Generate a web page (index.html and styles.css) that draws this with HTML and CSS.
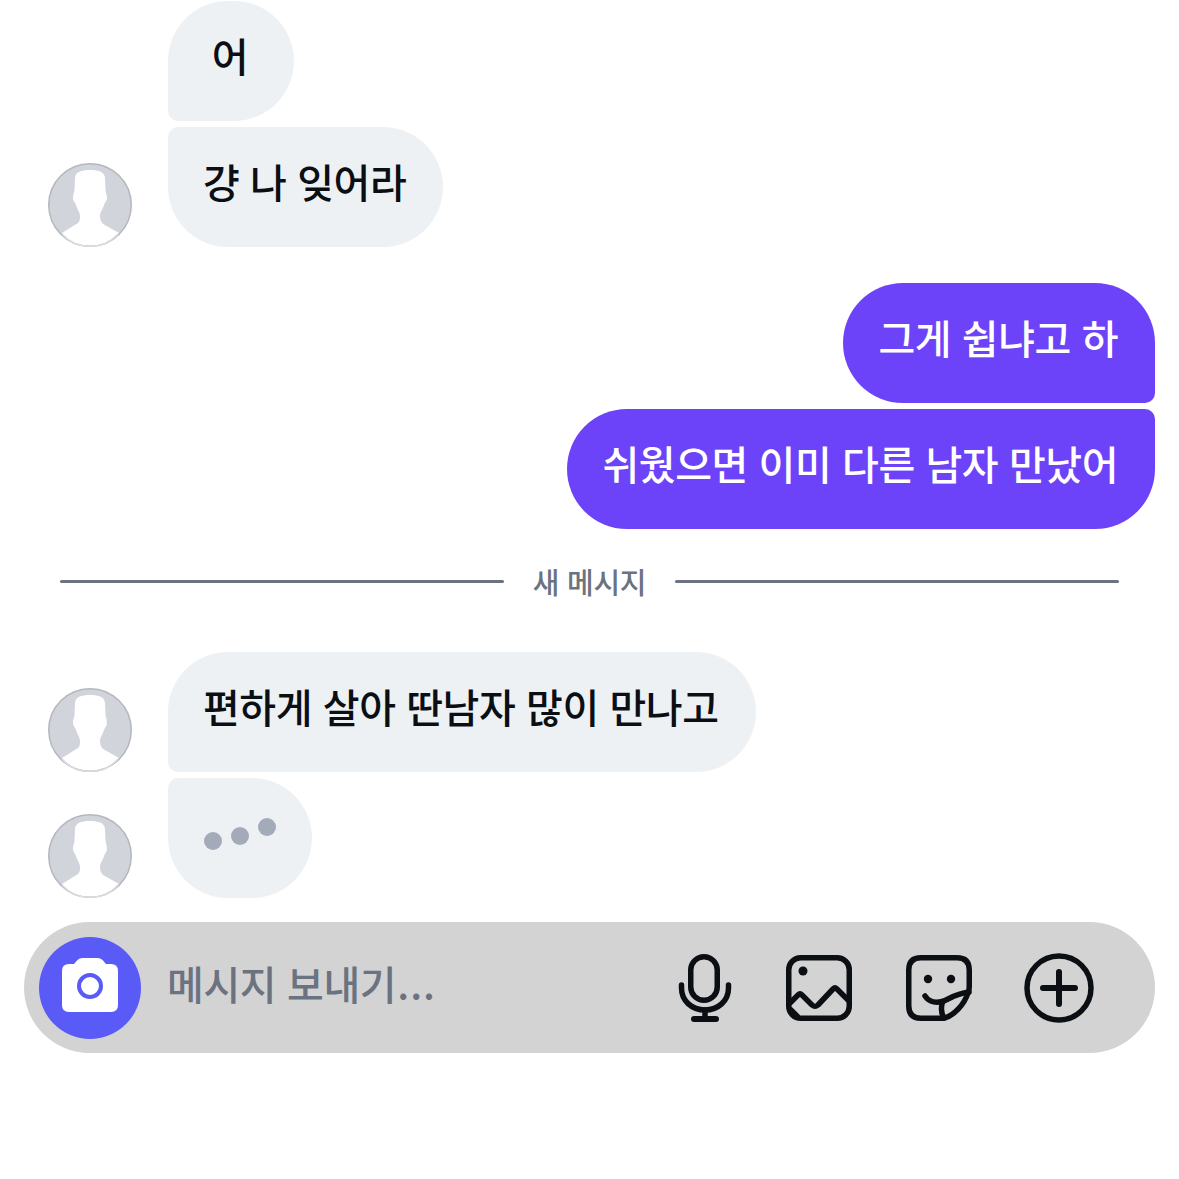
FILE: index.html
```html
<!DOCTYPE html>
<html lang="ko">
<head>
<meta charset="utf-8" />
<title>메시지</title>
<link rel="stylesheet" href="styles.css">
</head>
<body>
<div class="chat">
	<div class="row">
		<div class="avatar-space"></div>
		<div class="bubble them first short">어</div>
	</div>
	<div class="row">
		<svg class="avatar" viewBox="0 0 84 84"><use href="#person" /></svg>
		<div class="bubble them last">걍 나 잊어라</div>
	</div>

	<div class="row mine group-gap">
		<div class="bubble me first">그게 쉽냐고 하</div>
	</div>
	<div class="row mine">
		<div class="bubble me last">쉬웠으면 이미 다른 남자 만났어</div>
	</div>

	<div class="divider">
		<span class="line"></span>
		<span class="divider-text">새 메시지</span>
		<span class="line"></span>
	</div>

	<div class="row">
		<svg class="avatar" viewBox="0 0 84 84"><use href="#person" /></svg>
		<div class="bubble them first">편하게 살아 딴남자 많이 만나고</div>
	</div>
	<div class="row">
		<svg class="avatar" viewBox="0 0 84 84"><use href="#person" /></svg>
		<div class="bubble them last typing">
			<span class="dot dot1"></span>
			<span class="dot dot2"></span>
			<span class="dot dot3"></span>
		</div>
	</div>
</div>

<div class="bar">
	<div class="camera">
		<svg class="camera-icon" width="56" height="54" viewBox="0 0 56 54">
			<path d="M12 6 L15 2.500 Q17 0 20 0 H36 Q39 0 41 2.500 L44 6 H49 Q56 6 56 13 V47 Q56 54 49 54 H7 Q0 54 0 47 V13 Q0 6 7 6 Z" fill="#fff" />
			<circle cx="28" cy="28" r="11" fill="#fff" stroke="#5a5bf6" stroke-width="4" />
		</svg>
	</div>
	<div class="placeholder">메시지 보내기<span class="ellipsis">...</span></div>
	<div class="tools">
		<svg class="tool mic" viewBox="0 0 54 70" fill="none" stroke="#0b0f14" stroke-width="5.500" stroke-linecap="round">
			<rect x="12.750" y="3.750" width="26.500" height="43.500" rx="13.250" />
			<path d="M3.500 32 V35 C3.500 48 14 57 27 57 C40 57 50.500 48 50.500 35 V32" />
			<path d="M27 57 V65" />
			<path d="M16 66 H38" stroke-width="6" />
		</svg>
		<svg class="tool" viewBox="0 0 70 70" fill="none" stroke="#0b0f14" stroke-width="5.500" stroke-linejoin="round" stroke-linecap="round">
			<rect x="4.750" y="4.750" width="60.500" height="60.500" rx="12" />
			<circle cx="19" cy="18" r="4.500" fill="#0b0f14" stroke="none" />
			<path d="M6 50 L14 42 Q16 40 18 42 L28 52 Q31 54.500 34 52 L49 36 Q51 34 53 36 L64 47" />
			<path d="M7 56 L14 63" stroke-width="4" />
		</svg>
		<svg class="tool" viewBox="0 0 70 70" fill="none" stroke="#0b0f14" stroke-width="5.500" stroke-linejoin="round" stroke-linecap="round">
			<path d="M17 4.750 H53 Q65.250 4.750 65.250 17 V32 Q65.250 38 64 40 C60 52 50 62 41 65 Q39 65.250 36 65.250 H17 Q4.750 65.250 4.750 53 V17 Q4.750 4.750 17 4.750 Z" />
			<circle cx="24" cy="26" r="4.200" fill="#0b0f14" stroke="none" />
			<circle cx="47" cy="26" r="4.200" fill="#0b0f14" stroke="none" />
			<path d="M21 43 C25 49 32 50 38 48.500 C44 47 50 41 65 39" />
			<path d="M38.500 49 C37 54 37 60 40 65" />
		</svg>
		<svg class="tool" viewBox="0 0 70 70" fill="none" stroke="#0b0f14" stroke-width="5.500" stroke-linecap="round">
			<circle cx="35" cy="35" r="32" />
			<path d="M35 19 V51 M19 35 H51" stroke-width="6" />
		</svg>
	</div>
</div>

<svg class="defs" width="0" height="0">
	<symbol id="person" viewBox="0 0 84 84">
		<circle cx="42" cy="42" r="41.500" fill="#d1d5db" />
		<path d="M42 7 C33 7 27.500 9 27 15 L26.500 27 C26 30 25 32 25 35 C25 38 27 39 28 42 C29 46 32 49 32 53 C32 56 32 58 30 60 L14 70 C21 79 31 83.500 42 83.500 C53 83.500 63 79 71 70 L55 61 C53 59 52 56 52 53 C52 49 55 46 56 42 C57 39 59 38 59 35 C59 32 58 30 57.500 27 L57 15 C56.500 9 51 7 42 7 Z" fill="#fff" />
		<circle cx="42" cy="42" r="41.250" fill="none" stroke="#b4b8be" stroke-width="1.500" />
		<path d="M14 71 C21 79 31 83.300 42 83.300 C53 83.300 63 79 70 71" fill="none" stroke="#d9dbde" stroke-width="1.500" />
	</symbol>
</svg>
</body>
</html>
```

FILE: styles.css
```css
* {
	margin: 0;
	padding: 0;
	box-sizing: border-box;
}

body {
	background: #fff;
	font-family: "Noto Sans CJK KR", "Noto Sans", sans-serif;
	color: #0b0f14;
}

.chat {
	display: flex;
	flex-direction: column;
	gap: 6px;
	padding: 1px 24px 0 48px;
}

.row {
	display: flex;
	align-items: flex-end;
	gap: 36px;
}

.row.mine {
	justify-content: flex-end;
}

.group-gap {
	margin-top: 30px;
}

.avatar,
.avatar-space {
	flex: none;
	width: 84px;
	height: 84px;
}

.bubble {
	height: 120px;
	padding: 0 37px 12px 35px;
	display: flex;
	align-items: center;
	font-size: 40px;
	font-weight: 500;
	letter-spacing: -0.45px;
	line-height: 1;
	border-radius: 60px;
	white-space: nowrap;
}

.short {
	min-width: 126px;
	justify-content: center;
}

.them {
	background: #eef1f4;
}

.them.first {
	border-bottom-left-radius: 10px;
}

.them.last {
	border-top-left-radius: 10px;
}

.me {
	background: #6c43f8;
	color: #fff;
}

.me.first {
	border-bottom-right-radius: 10px;
}

.me.last {
	border-top-right-radius: 10px;
}

.divider {
	display: flex;
	align-items: center;
	gap: 29px;
	height: 40px;
	margin: 26px 36px 45px 12px;
}

.line {
	flex: 1;
	height: 3px;
	border-radius: 2px;
	background: #6b7280;
}

.divider-text {
	font-size: 29px;
	font-weight: 500;
	letter-spacing: -0.3px;
	color: #6b7280;
}

.typing {
	gap: 9px;
	padding: 0 36px;
}

.dot {
	width: 18px;
	height: 18px;
	border-radius: 50%;
	background: #a3aab8;
}

.dot1 {
	transform: translateY(3px);
}

.dot2 {
	transform: translateY(-2px);
}

.dot3 {
	transform: translateY(-11px);
}

.bar {
	display: flex;
	align-items: center;
	height: 131px;
	margin: 24px 24px 0;
	padding: 0 61px 0 15px;
	border-radius: 66px;
	background: #d3d3d4;
}

.camera {
	flex: none;
	width: 102px;
	height: 102px;
	display: flex;
	align-items: center;
	justify-content: center;
	border-radius: 50%;
	background: #5a5bf6;
}

.camera-icon {
	margin-bottom: 5px;
}

.placeholder {
	flex: 1;
	margin-left: 26px;
	padding-bottom: 9px;
	font-size: 40px;
	font-weight: 500;
	letter-spacing: -0.4px;
	color: #6b7280;
}

.ellipsis {
	margin-left: 1px;
	letter-spacing: 1px;
}

.tools {
	display: flex;
	align-items: center;
	gap: 50px;
}

.tool {
	width: 70px;
	height: 70px;
}

.tool.mic {
	width: 54px;
	margin-right: 2px;
}

.defs {
	position: absolute;
}
```
